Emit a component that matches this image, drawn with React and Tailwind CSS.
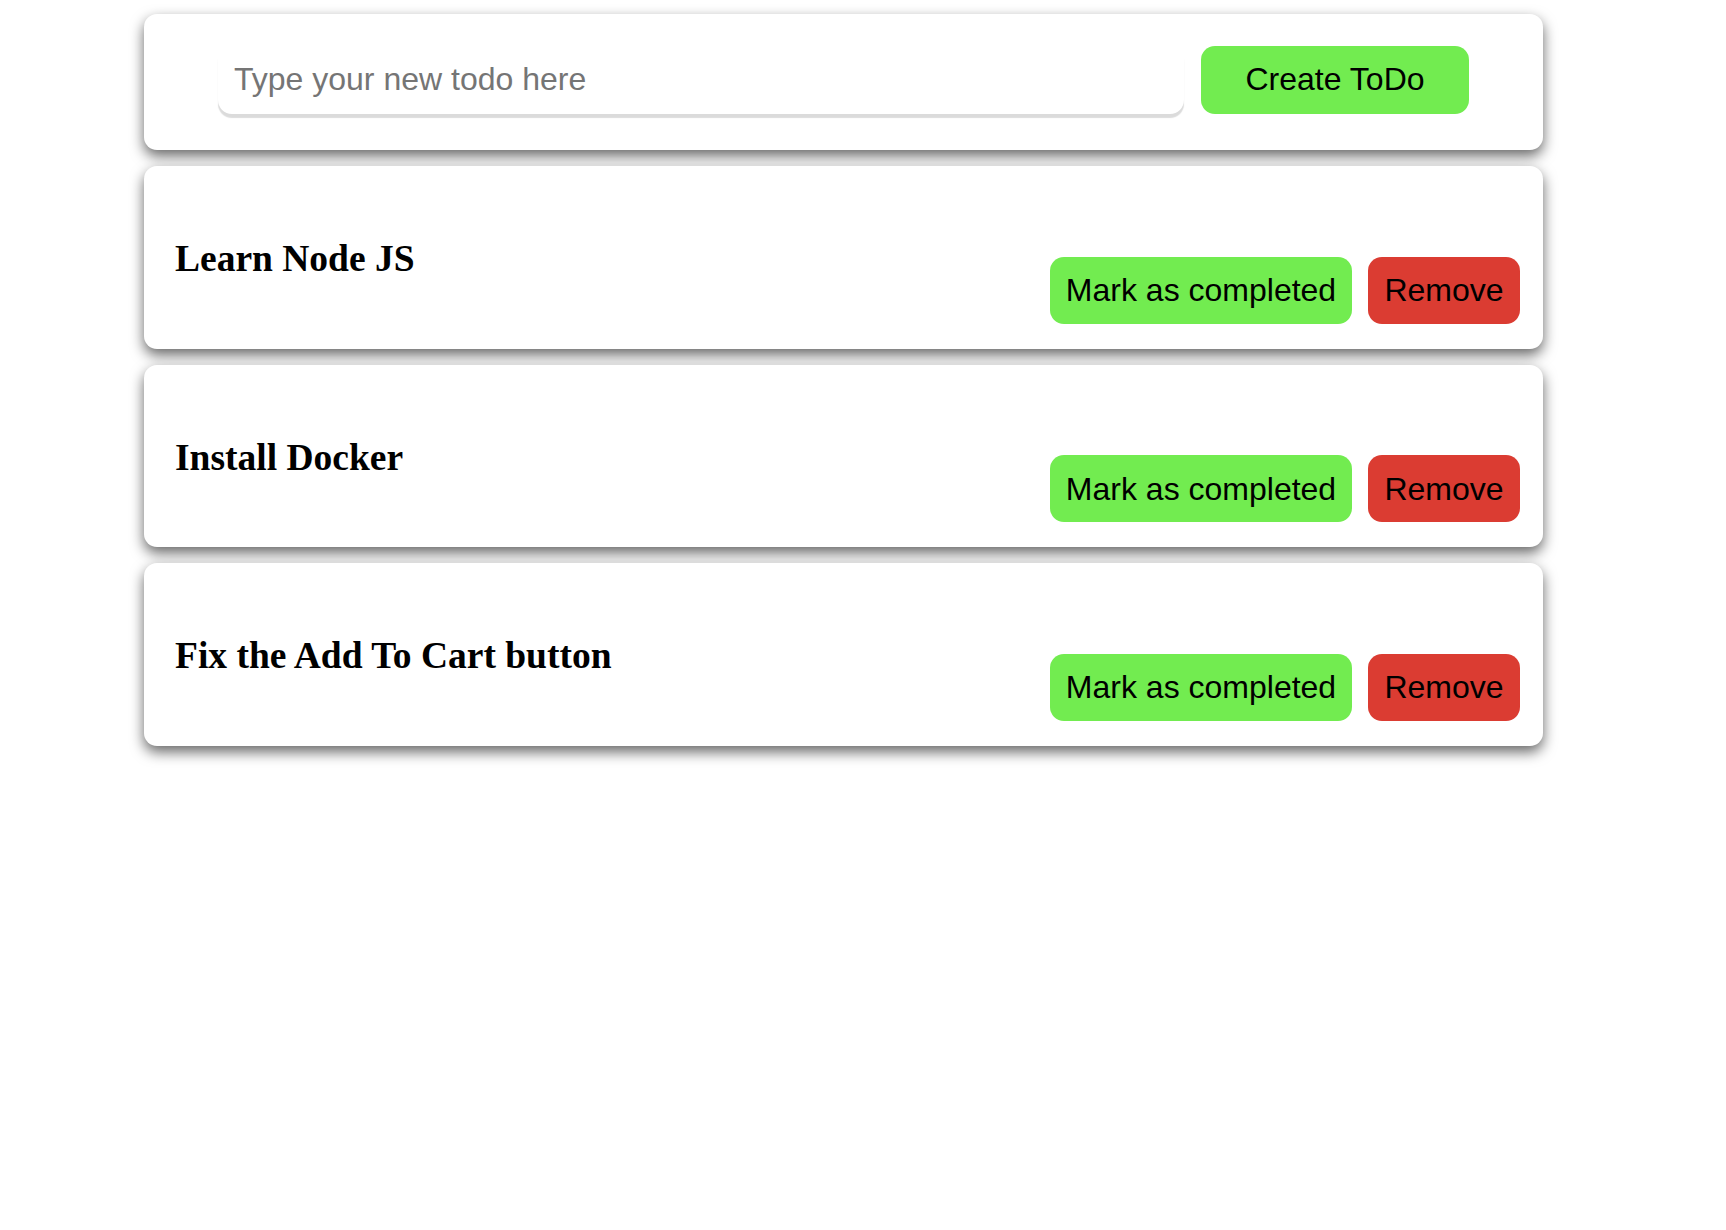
import React from "react";

const todos = ["Learn Node JS", "Install Docker", "Fix the Add To Cart button"];

function Btn({ children, color, className = "" }) {
  return (
    <button
      className={`h-[67px] rounded-[14px] text-black text-[32px] leading-none font-['Liberation_Sans',Arial,sans-serif] ${color} ${className}`}
    >
      {children}
    </button>
  );
}

export default function App() {
  return (
    <div className="min-h-[1230px] bg-white pt-[14px] font-['Liberation_Sans',Arial,sans-serif]">
      <div className="ml-[144px] w-[1399px] flex flex-col gap-[16px]">
        <div className="bg-white rounded-[13px] shadow-[0_6px_14px_rgba(0,0,0,0.6)] px-[74px] pt-[32px] pb-[36px] flex items-start gap-[17px]">
          <input
            type="text"
            placeholder="Type your new todo here"
            className="flex-1 h-[68px] rounded-[14px] bg-white pl-[16px] pb-[2px] text-[32px] text-black placeholder:text-[#757575] outline-none shadow-[0_4px_1px_rgba(0,0,0,0.14)] font-['Liberation_Sans',Arial,sans-serif]"
          />
          <Btn color="bg-[#72ec50]" className="w-[268px] h-[68px] pb-[2px]">
            Create ToDo
          </Btn>
        </div>
        {todos.map((t) => (
          <div
            key={t}
            className="bg-white rounded-[13px] shadow-[0_6px_14px_rgba(0,0,0,0.6)] h-[182.5px] pl-[31px] pr-[23px] pb-[25px] flex justify-between items-end"
          >
            <h2 className="self-start mt-[74px] text-[37.5px] leading-[37px] font-bold text-black font-['Liberation_Serif','Times_New_Roman',serif]">
              {t}
            </h2>
            <div className="flex gap-[16px]">
              <Btn color="bg-[#72ec50]" className="w-[302px]">
                Mark as completed
              </Btn>
              <Btn color="bg-[#db3c32]" className="w-[152px]">
                Remove
              </Btn>
            </div>
          </div>
        ))}
      </div>
    </div>
  );
}
